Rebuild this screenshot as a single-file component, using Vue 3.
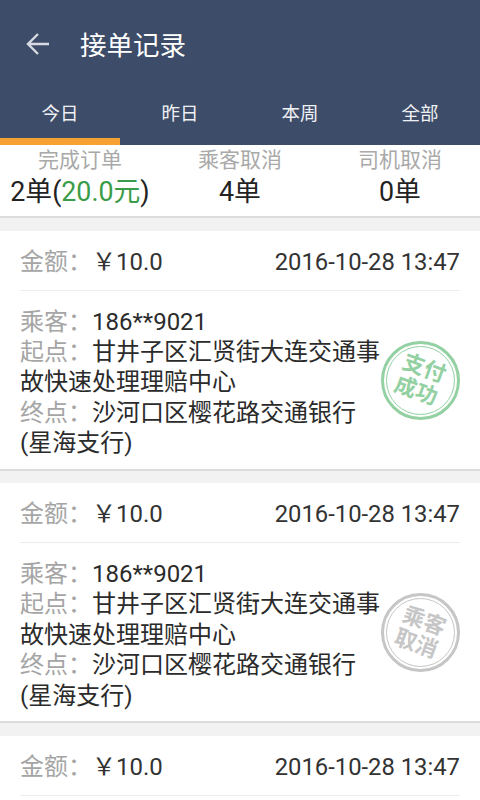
<script setup>
const tabs = ['今日', '昨日', '本周', '全部']
const orders = [
  { stamp: '支付\n成功', cls: 'green' },
  { stamp: '乘客\n取消', cls: 'gray' },
  { stamp: '', cls: '' }
]
</script>

<template>
  <div class="page">
    <header class="head">
      <div class="title-row">
        <svg class="back" width="24" height="24" viewBox="0 0 24 24" fill="none" stroke="#d6dae2" stroke-width="2.4">
          <path d="M23 12H2M12 2L2 12l10 10" />
        </svg>
        <span class="title">接单记录</span>
      </div>
      <nav class="tabs">
        <div v-for="(t, i) in tabs" :key="t" class="tab" :class="{ on: i === 0 }">{{ t }}</div>
      </nav>
    </header>

    <section class="stats">
      <div class="stat"><span class="s-label">完成订单</span><span class="s-val">2单(<em>20.0元</em>)</span></div>
      <div class="stat"><span class="s-label">乘客取消</span><span class="s-val">4单</span></div>
      <div class="stat"><span class="s-label">司机取消</span><span class="s-val">0单</span></div>
    </section>

    <article v-for="(o, i) in orders" :key="i" class="card">
      <div class="top">
        <span><span class="lab">金额：</span><span class="amount">￥10.0</span></span>
        <span class="time">2016-10-28 13:47</span>
      </div>
      <div class="body">
        <p><span class="lab">乘客：</span>186**9021</p>
        <p><span class="lab">起点：</span>甘井子区汇贤街大连交通事故快速处理理赔中心</p>
        <p><span class="lab">终点：</span>沙河口区樱花路交通银行(星海支行)</p>
      </div>
      <div v-if="o.stamp" class="stamp" :class="o.cls"><span>{{ o.stamp }}</span></div>
    </article>
  </div>
</template>

<style>
html, body { margin: 0; height: 800px; overflow: hidden; background: #f2f2f2; }
</style>

<style scoped>
.page { width: 480px; height: 800px; overflow: hidden; background: #f2f2f2; font-family: Roboto, "Noto Sans CJK SC", sans-serif; color: #2b2b2b; }
.head { background: #3d4c68; height: 145px; display: flex; flex-direction: column; }
.title-row { height: 87px; display: flex; align-items: center; padding-left: 26px; box-sizing: border-box; }
.back { margin-right: 30px; }
.title { color: #fff; font-size: 26.5px; }
.tabs { display: flex; flex: 1; }
.tab { flex: 1; color: #f0f1f4; font-size: 18.5px; text-align: center; line-height: 54px; height: 58px; box-sizing: border-box; }
.tab.on { border-bottom: 7px solid #f5a133; }
.stats { background: #fff; height: 73px; display: flex; border-bottom: 2px solid #dcdcdc; box-sizing: border-box; }
.stat { flex: 1; display: flex; flex-direction: column; align-items: center; }
.s-label { color: #a9a9a9; font-size: 21px; line-height: 30px; }
.s-val { font-size: 26.8px; line-height: 35px; color: #222; }
.s-val em { font-style: normal; color: #3a9c48; }
.card { position: relative; background: #fff; margin-top: 12.5px; height: 238px; border-bottom: 2px solid #dcdcdc; padding: 0 20px; }
.top { height: 60px; display: flex; justify-content: space-between; align-items: baseline; font-size: 24px; line-height: 62px; border-bottom: 1px solid #ececec; box-sizing: border-box; }
.lab { color: #a5a5a5; }
.amount { color: #333; }
.time { color: #333; font-size: 23.8px; }
.body { padding-top: 16px; font-size: 24px; line-height: 30.4px; width: 362px; }
.body p { margin: 0; }
.stamp { position: absolute; right: 20px; top: 110px; width: 79px; height: 79px; box-sizing: border-box; border-radius: 50%; border: 3px solid; display: flex; align-items: center; justify-content: center; }
.stamp::before { content: ""; position: absolute; inset: 2px; border-radius: 50%; border: 1px solid; }
.stamp span { white-space: pre; transform: rotate(20deg); font-size: 22px; line-height: 24px; font-weight: 700; text-align: center; }
.green { color: #93d0a2; border-color: #93d0a2; }
.gray { color: #c6c6c6; border-color: #c6c6c6; }
</style>
